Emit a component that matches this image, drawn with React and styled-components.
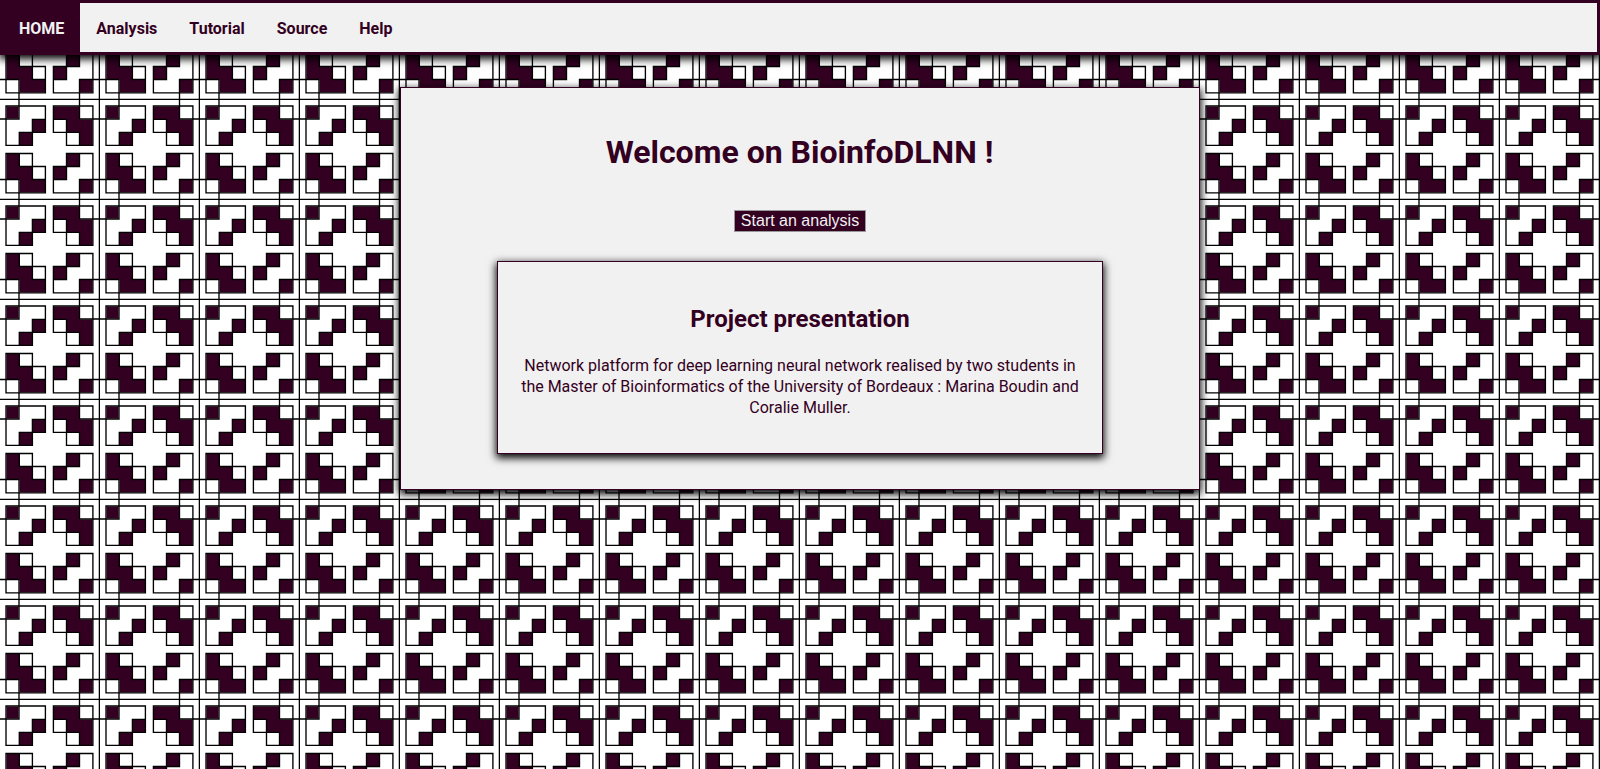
import React from "react";
import styled, { createGlobalStyle } from "styled-components";

const plum = "#330022";
const paper = "#f1f1f1";

const tile = `<svg xmlns="http://www.w3.org/2000/svg" width="100" height="100" viewBox="0 0 100 100">
<rect width="100" height="100" fill="#fff"/>
<path fill="${plum}" d="M6.500 6.500h12v12h-12zM32.500 19.500h13v13h-13zM19 32.500h13.500v13h-13.500zM53.500 6.500H79.500V19.500H92.500V45.500H79.500V32.500H66.500V19.500H53.500zM6.500 53.500H19.500V66.500H32.500V79.500H45.500V92.500H19.500V79.500H6.500zM66.500 53.500h13v13h-13zM53.500 66.500h13v13h-13zM79.500 79.500h13v13h-13z"/>
<path fill="none" stroke="#000" stroke-width="1.35" d="
M99.400 0V100M0 99.400H100
M6 6H45.400V32.400H32.400V45.400H6ZM32.400 32.400V19.300H45.400M32.400 32.400H19.300V45.400M19 0V19H0
M53.400 6H92.900V45.400H66.500V32.400H53.400ZM53.400 19.300H66.500V32.400H79.500V45.400M79.500 0V19H100M66.500 19.300V32.400H79.500
M6 53.500H32.400V66.500H45.400V92.900H6ZM19.300 53.500V66.500H32.400V79.500H45.400M0 79.500H19V100
M66.500 53.500H92.900V92.900H53.400V66.500H66.500ZM79.500 53.500V66.500H66.500V79.500H53.400M79.500 100V79.500H100"/>
</svg>`;

const shadow = "0 3px 8px 1px #000";

const Page = createGlobalStyle`
  body {
    margin: 0;
    min-height: 100vh;
    color: ${plum};
    font: 16px/21px Roboto, sans-serif;
    background: url("data:image/svg+xml,${encodeURIComponent(tile)}") 0 0 / 100px 100px;
  }
`;

const Nav = styled.nav`
  box-sizing: border-box;
  display: flex;
  height: 55px;
  border: 3px solid ${plum};
  background: ${paper};
  box-shadow: ${shadow};
`;

const NavLink = styled.a`
  padding: 15px 16px 13px;
  font-weight: 700;
  color: ${(p) => (p.$active ? paper : plum)};
  background: ${(p) => (p.$active ? plum : "transparent")};
`;

const Panel = styled.main`
  box-sizing: border-box;
  width: 800px;
  height: 403px;
  margin: 32px auto 0;
  border: 1px solid ${plum};
  background: ${paper};
  box-shadow: ${shadow};
  display: flex;
  flex-direction: column;
  align-items: center;
  text-align: center;
`;

const Title = styled.h1`
  margin: 45px 0 0;
  padding-right: 1px;
  font-size: 32px;
  line-height: 38px;
`;

const StartButton = styled.button`
  box-sizing: border-box;
  width: 132px;
  height: 22px;
  margin-top: 39px;
  padding: 0;
  border: 1px solid #999;
  border-radius: 0;
  background: ${plum};
  color: ${paper};
  font: 16px/18px "Liberation Sans", sans-serif;
`;

const Card = styled.section`
  box-sizing: border-box;
  width: 606px;
  height: 193px;
  margin-top: 29px;
  padding: 43px 20px 0;
  border: 1px solid ${plum};
  background: ${paper};
  box-shadow: ${shadow};
`;

const CardTitle = styled.h2`
  margin: 0;
  font-size: 24px;
  line-height: 28px;
`;

const CardText = styled.p`
  margin: 22px 0 0;
`;

const links = ["HOME", "Analysis", "Tutorial", "Source", "Help"];

export default function App() {
  return (
    <>
      <Page />
      <Nav>
        {links.map((name, i) => (
          <NavLink key={name} $active={i === 0}>{name}</NavLink>
        ))}
      </Nav>
      <Panel>
        <Title>Welcome on BioinfoDLNN !</Title>
        <StartButton>Start an analysis</StartButton>
        <Card>
          <CardTitle>Project presentation</CardTitle>
          <CardText>
            Network platform for deep learning neural network realised by two students in the Master of Bioinformatics of the University of Bordeaux : Marina Boudin and Coralie Muller.
          </CardText>
        </Card>
      </Panel>
    </>
  );
}
